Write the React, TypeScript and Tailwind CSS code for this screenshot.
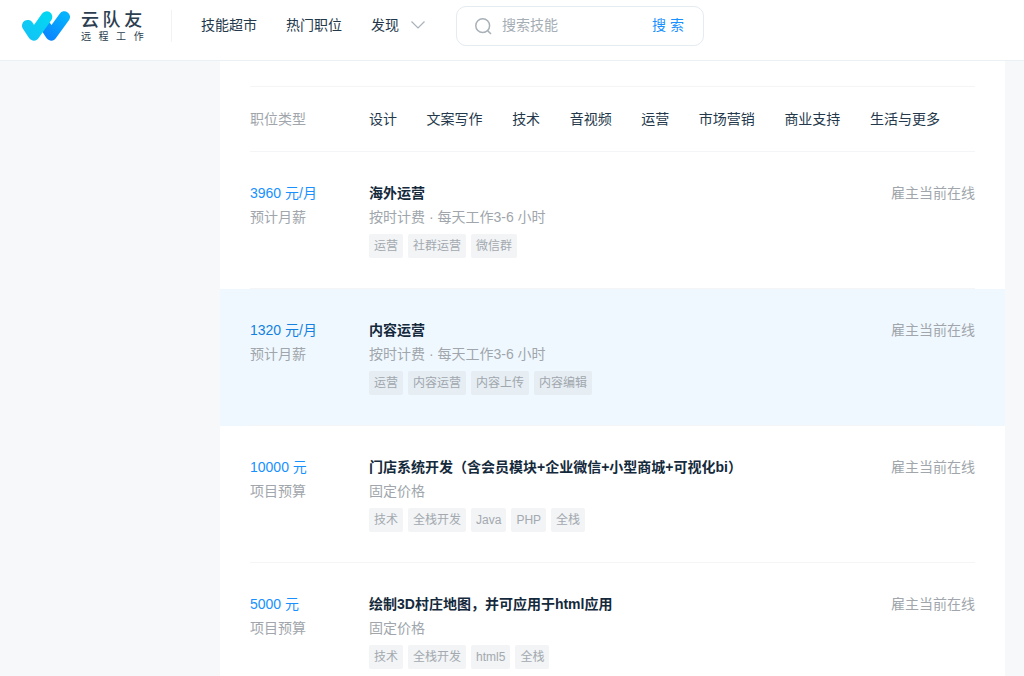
import React from 'react';

type Job = {
  pay: string;
  payLabel: string;
  title: string;
  terms: string;
  tags: string[];
  active?: boolean;
};

const categories = ['设计', '文案写作', '技术', '音视频', '运营', '市场营销', '商业支持', '生活与更多'];

const jobs: Job[] = [
  {
    pay: '3960 元/月',
    payLabel: '预计月薪',
    title: '海外运营',
    terms: '按时计费 · 每天工作3-6 小时',
    tags: ['运营', '社群运营', '微信群'],
  },
  {
    pay: '1320 元/月',
    payLabel: '预计月薪',
    title: '内容运营',
    terms: '按时计费 · 每天工作3-6 小时',
    tags: ['运营', '内容运营', '内容上传', '内容编辑'],
    active: true,
  },
  {
    pay: '10000 元',
    payLabel: '项目预算',
    title: '门店系统开发（含会员模块+企业微信+小型商城+可视化bi）',
    terms: '固定价格',
    tags: ['技术', '全栈开发', 'Java', 'PHP', '全栈'],
  },
  {
    pay: '5000 元',
    payLabel: '项目预算',
    title: '绘制3D村庄地图，并可应用于html应用',
    terms: '固定价格',
    tags: ['技术', '全栈开发', 'html5', '全栈'],
  },
];

function LogoMark() {
  return (
    <svg width="48" height="30" viewBox="0 0 48 30" fill="none" aria-hidden="true">
      <defs>
        <linearGradient id="tickRight" x1="42" y1="4" x2="26" y2="26" gradientUnits="userSpaceOnUse">
          <stop stopColor="#04b2fd" />
          <stop offset="1" stopColor="#0a86ff" />
        </linearGradient>
        <linearGradient id="tickLeft" x1="6" y1="26" x2="26" y2="6" gradientUnits="userSpaceOnUse">
          <stop stopColor="#12c4f6" />
          <stop offset="1" stopColor="#04d6f2" />
        </linearGradient>
      </defs>
      <path
        d="M24 16L29.2 24L42.3 6"
        stroke="url(#tickRight)"
        strokeWidth="11.4"
        strokeLinecap="round"
        strokeLinejoin="round"
      />
      <path
        d="M5.7 14.6L11.8 24L24.6 6"
        stroke="url(#tickLeft)"
        strokeWidth="11.4"
        strokeLinecap="round"
        strokeLinejoin="round"
      />
    </svg>
  );
}

function Header() {
  return (
    <header className="flex h-[61px] items-center border-b border-[#ebf0f4] bg-white pb-2 pl-[22px]">
      <a href="#" className="flex items-center gap-[11px] text-[#2c3e50]">
        <LogoMark />
        <span className="flex w-[62px] flex-col gap-px whitespace-nowrap">
          <span className="text-[18px] leading-5 font-medium">{'云\u2009队\u2009友'}</span>
          <span className="text-[10px] leading-3">{'远\u00a0\u00a0\u2009程\u00a0\u00a0\u2009工\u00a0\u00a0\u2009作'}</span>
        </span>
      </a>
      <div className="ml-7 h-8 w-px bg-[#f0f3f6]" />
      <nav className="ml-[29px] flex items-center gap-[29px] pb-[2px] text-[#24384b]">
        <a href="#">技能超市</a>
        <a href="#">热门职位</a>
        <a href="#" className="flex items-center gap-3">
          发现
          <svg width="14" height="8" viewBox="0 0 14 8" fill="none" stroke="#a9b2ba" strokeWidth="1.2" aria-hidden="true">
            <path d="M0.5 0.5L7 7L13.5 0.5" />
          </svg>
        </a>
      </nav>
      <form className="ml-[31px] flex h-10 w-[248px] items-center rounded-[10px] border border-[#e4ebf1] pr-[19px] pl-[18px]">
        <svg width="17" height="17" viewBox="0 0 17 17" fill="none" stroke="#a8b0b8" strokeWidth="1.5" aria-hidden="true">
          <circle cx="7.7" cy="7.7" r="6.9" />
          <path d="M12.6 12.6L16 16" />
        </svg>
        <input
          type="text"
          aria-label="搜索技能"
          placeholder="搜索技能"
          className="ml-[10px] min-w-0 flex-1 pb-[2px] outline-none placeholder:text-[#a5adb5]"
        />
        <button type="button" className="pb-[2px] text-[#1890ff]">
          搜 索
        </button>
      </form>
    </header>
  );
}

function JobRow({ job }: { job: Job }) {
  return (
    <li className={job.active ? 'bg-[#f0f8ff] px-[30px]' : 'px-[30px]'}>
      <div className="flex border-b border-[#f3f5f7] pt-[29px] pb-[30px]">
        <div className="w-[119px] shrink-0">
          <p className={job.active ? 'text-[#1281e0]' : 'text-[#1890ff]'}>{job.pay}</p>
          <p className="text-[#a0a6ac]">{job.payLabel}</p>
        </div>
        <div className="min-w-0 flex-1">
          <h2 className="font-bold text-[#14293b]">
            <a href="#">{job.title}</a>
          </h2>
          <p className="text-[#a0a6ac]">{job.terms}</p>
          <ul className="mt-[5px] flex flex-wrap gap-[5px] text-[12px]">
            {job.tags.map((tag) => (
              <li
                key={tag}
                className={
                  job.active
                    ? 'rounded-[2px] bg-[#e6edf3] px-[5px] text-[#a0a7ad]'
                    : 'rounded-[2px] bg-[#f2f4f6] px-[5px] text-[#a3a9af]'
                }
              >
                {tag}
              </li>
            ))}
          </ul>
        </div>
        <p className="shrink-0 text-[#a0a6ac]">雇主当前在线</p>
      </div>
    </li>
  );
}

export default function App() {
  return (
    <div className="h-screen overflow-hidden bg-[#f7f8fa] font-['Liberation_Sans','Noto_Sans_CJK_SC',sans-serif] text-[14px] leading-6">
      <Header />
      <main className="mr-[19px] ml-[220px] bg-white pt-[25px]">
        <div className="px-[30px]">
          <div className="flex h-[66px] items-center border-y border-[#f3f5f7]">
            <span className="w-[119px] shrink-0 text-[#a0a6ac]">职位类型</span>
            <nav className="flex flex-1 justify-between pr-[35px] text-[#24384b]">
              {categories.map((name) => (
                <a key={name} href="#">
                  {name}
                </a>
              ))}
            </nav>
          </div>
        </div>
        <ul>
          {jobs.map((job) => (
            <JobRow key={job.title} job={job} />
          ))}
        </ul>
      </main>
    </div>
  );
}
